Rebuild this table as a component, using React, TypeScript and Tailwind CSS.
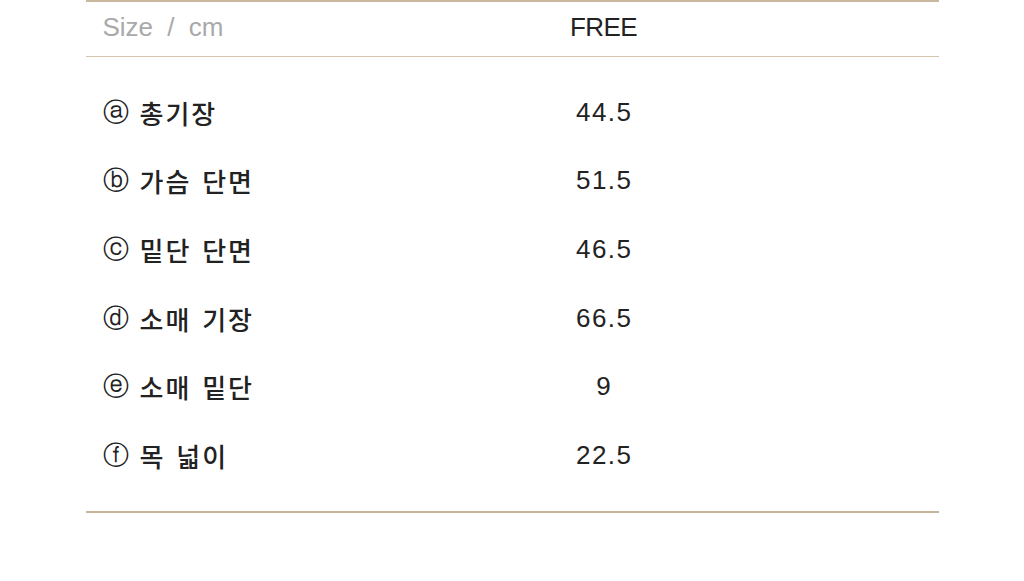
import React from "react";

const rows = [
  ["ⓐ", "총기장", "44.5"],
  ["ⓑ", "가슴 단면", "51.5"],
  ["ⓒ", "밑단 단면", "46.5"],
  ["ⓓ", "소매 기장", "66.5"],
  ["ⓔ", "소매 밑단", "9"],
  ["ⓕ", "목 넓이", "22.5"],
];

export default function App() {
  return (
    <div
      className="w-[1024px] h-[581px] bg-white"
      style={{ fontFamily: '"Liberation Sans", "Noto Sans CJK KR", sans-serif' }}
    >
      <div className="mx-auto w-[853px] border-t-2 border-[#c9b79f]">
        <div className="grid grid-cols-[183px_1fr] h-[55px] pb-[4px] items-center border-b border-[#d3c4ae]">
          <div className="pl-[17px] text-[26px] text-[#a9a9a9] [word-spacing:7px]">Size / cm</div>
          <div className="text-center text-[26px] text-[#222] tracking-[-0.6px]">FREE</div>
        </div>
        <div className="pt-[21px] pb-[21px] border-b-2 border-[#c6b39b]">
          {rows.map(([c, label, val]) => (
            <div key={label} className="grid grid-cols-[183px_1fr] h-[68.6px] items-center">
              <div className="pl-[17px] text-[26px] text-[#222] flex items-center gap-[11px] whitespace-nowrap">
                <span className="text-[26px]" style={{ fontFamily: '"DejaVu Sans", sans-serif', fontWeight: 300 }}>{c}</span>
                <span className="tracking-[2px] [word-spacing:3px]" style={{ fontFamily: '"Noto Sans CJK KR", sans-serif', fontWeight: 500 }}>{label}</span>
              </div>
              <div className="text-center text-[26px] text-[#222] tracking-[1.5px] pl-[1.5px]">{val}</div>
            </div>
          ))}
        </div>
      </div>
    </div>
  );
}
